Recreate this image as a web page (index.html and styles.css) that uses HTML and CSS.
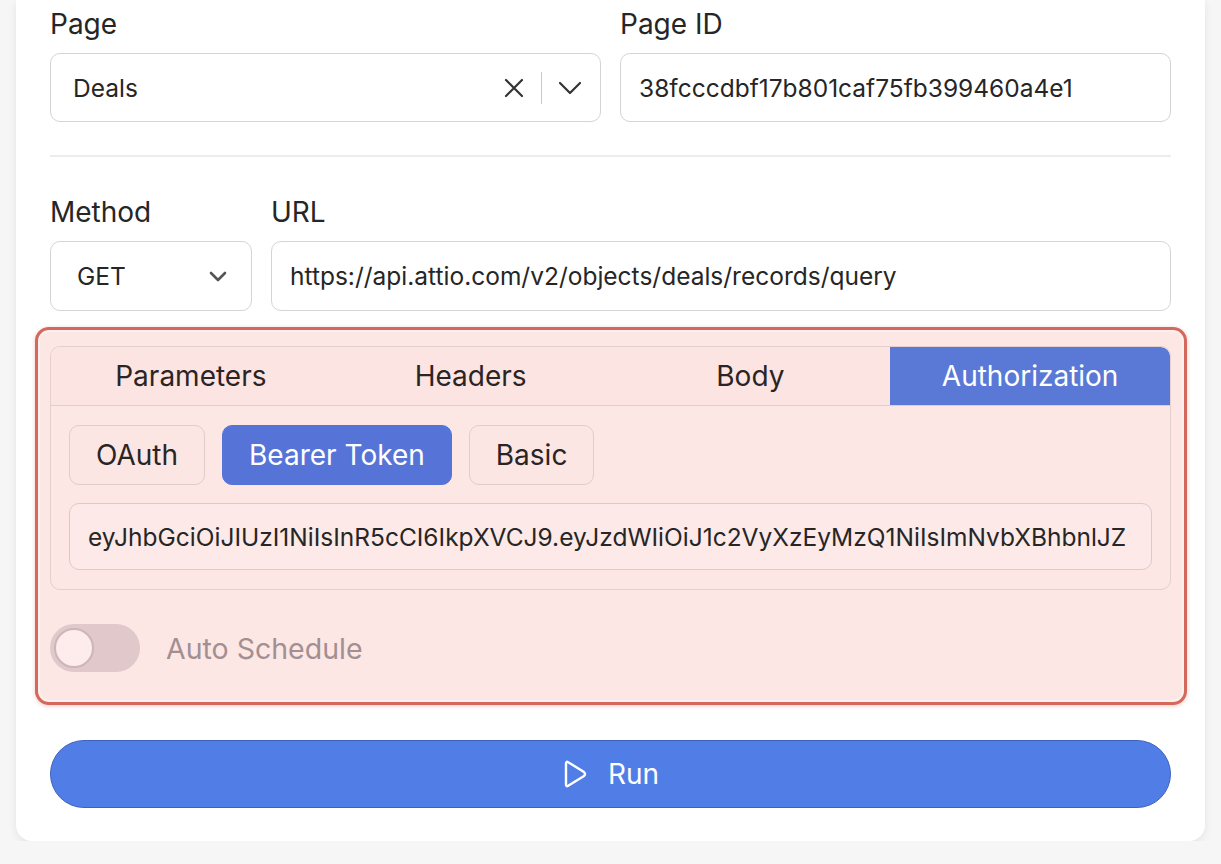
FILE: index.html
```html
<!DOCTYPE html>
<html lang="en">

<head>
  <meta charset="UTF-8" />
  <meta name="viewport" content="width=device-width, initial-scale=1.0" />
  <title>request runner</title>
  <link rel="stylesheet" href="styles.css">
</head>

<body>
  <div class="card">
    <div class="row two">
      <div class="field">
        <label>Page</label>
        <div class="box select">
          <span class="value">Deals</span>
          <span class="select-icons">
            <svg class="clear" width="22" height="22" viewBox="0 0 22 22"><path d="M3 3 L19 19 M19 3 L3 19" /></svg>
            <i class="sep"></i>
            <svg class="chev" width="24" height="14" viewBox="0 0 24 14"><path d="M2 2 L12 12 L22 2" /></svg>
          </span>
        </div>
      </div>
      <div class="field">
        <label>Page ID</label>
        <div class="box">38fcccdbf17b801caf75fb399460a4e1</div>
      </div>
    </div>

    <hr class="divider" />

    <div class="row method-row">
      <div class="field">
        <label>Method</label>
        <div class="box select">
          <span class="value">GET</span>
          <svg class="chev small" width="18" height="11" viewBox="0 0 18 11"><path d="M2 2 L9 9 L16 2" /></svg>
        </div>
      </div>
      <div class="field">
        <label>URL</label>
        <div class="box">https://api.attio.com/v2/objects/deals/records/query</div>
      </div>
    </div>

    <!-- highlighted request block -->
    <div class="panel">
      <div class="tabs">
        <ul class="tab-list">
          <li>Parameters</li>
          <li>Headers</li>
          <li>Body</li>
          <li class="active">Authorization</li>
        </ul>
        <div class="tab-body">
          <div class="auth-types">
            <button>OAuth</button>
            <button class="active">Bearer Token</button>
            <button>Basic</button>
          </div>
          <div class="token">eyJhbGciOiJIUzI1NiIsInR5cCI6IkpXVCJ9.eyJzdWIiOiJ1c2VyXzEyMzQ1NiIsImNvbXBhbnlJZ</div>
        </div>
      </div>
      <div class="schedule">
        <span class="toggle"><i></i></span>
        <span>Auto Schedule</span>
      </div>
    </div>

    <button class="run">
      <svg width="26" height="30" viewBox="0 0 26 30"><path d="M4 4.5 Q4 2 6.2 3.2 L22 13 Q24 15 22 17 L6.2 26.8 Q4 28 4 25.5 Z" /></svg>
      Run
    </button>
  </div>
</body>

</html>
```

FILE: styles.css
```css
* {
  margin: 0;
  padding: 0;
  box-sizing: border-box;
}

body {
  background: #f6f6f7;
  font-family: Inter, "Liberation Sans", sans-serif;
  color: #262626;
}

.card {
  margin: 0 16px;
  padding: 8px 34px 33px;
  background: #fff;
  border-radius: 0 0 16px 16px;
  box-shadow: 0 3px 8px rgba(0, 0, 0, .08);
}

.row {
  display: grid;
  gap: 19px;
}

.row.two {
  grid-template-columns: 1fr 1fr;
}

.row.method-row {
  grid-template-columns: 202px 1fr;
}

.field label {
  display: block;
  font-size: 28px;
  line-height: 32px;
  margin-bottom: 13px;
  color: #262626;
}

.box {
  height: 69px;
  border: 1px solid #d4d4d8;
  border-radius: 10px;
  background: #fff;
  padding: 0 18px;
  display: flex;
  align-items: center;
  font-size: 24.5px;
  color: #262626;
  white-space: nowrap;
  overflow: hidden;
}

.select {
  justify-content: space-between;
  padding: 0 18px 0 22px;
}

.method-row .select {
  padding: 0 24px 0 26px;
}

.method-row .box {
  height: 70px;
}

.select-icons {
  display: flex;
  align-items: center;
  gap: 16px;
}

.select-icons .sep {
  width: 1px;
  height: 32px;
  background: #c8c8cc;
}

.select svg path {
  fill: none;
  stroke: #333;
  stroke-width: 2.2;
  stroke-linecap: round;
  stroke-linejoin: round;
}

.select .chev.small path {
  stroke: #555;
  stroke-width: 2.6;
}

.divider {
  border: none;
  border-top: 2px solid #ececee;
  margin: 33px 0 39px;
}

.panel {
  margin: 16px -16px 0 -15px;
  padding: 16px 13px 30px 12px;
  border: 3px solid #d5685c;
  border-radius: 14px;
  background: #fce7e5;
  box-shadow: 0 1px 4px rgba(213, 104, 92, .35), inset 0 0 0 2px rgba(255, 255, 255, .35);
}

.tabs {
  border: 1px solid #e5cfcd;
  border-radius: 10px;
  overflow: hidden;
}

.tab-list {
  list-style: none;
  display: grid;
  grid-template-columns: repeat(4, 1fr);
  border-bottom: 1px solid #e3cdcb;
  background: #fbe4e2;
}

.tab-list li {
  height: 58px;
  display: flex;
  align-items: center;
  justify-content: center;
  font-size: 28px;
  color: #2b2424;
}

.tab-list li.active {
  background: #5a78d6;
  color: #fff;
  border-top-right-radius: 9px;
}

.tab-body {
  padding: 19px 18px 19px 18px;
}

.auth-types {
  display: flex;
  gap: 17px;
  margin-bottom: 18px;
}

.auth-types button {
  height: 60px;
  padding: 0 26px;
  border: 1px solid #e3cbc9;
  border-radius: 10px;
  background: #fbe6e4;
  font-family: inherit;
  font-size: 28px;
  color: #2b2424;
}

.auth-types button.active {
  background: #5674d8;
  border-color: #5674d8;
  color: #fff;
}

.token {
  height: 67px;
  border: 1px solid #dccac8;
  border-radius: 10px;
  background: #fde9e7;
  padding: 0 18px;
  display: flex;
  align-items: center;
  font-size: 24.5px;
  color: #262626;
  white-space: nowrap;
  overflow: hidden;
}

.schedule {
  display: flex;
  align-items: center;
  gap: 26px;
  margin-top: 34px;
  font-size: 28.5px;
  color: #a38f92;
}

.toggle {
  width: 90px;
  height: 48px;
  border-radius: 24px;
  background: #e0c8cb;
  padding: 4px;
  display: flex;
}

.toggle i {
  width: 40px;
  height: 40px;
  border-radius: 50%;
  background: #fdeceb;
  border: 2px solid #ccb6b9;
}

.run {
  margin-top: 35px;
  width: 100%;
  height: 68px;
  border: 1px solid #3f62bd;
  border-radius: 34px;
  background: #517ee6;
  color: #fff;
  font-family: inherit;
  font-size: 28px;
  display: flex;
  align-items: center;
  justify-content: center;
  gap: 20px;
}

.run svg path {
  fill: none;
  stroke: #fff;
  stroke-width: 2.4;
  stroke-linejoin: round;
}
```
